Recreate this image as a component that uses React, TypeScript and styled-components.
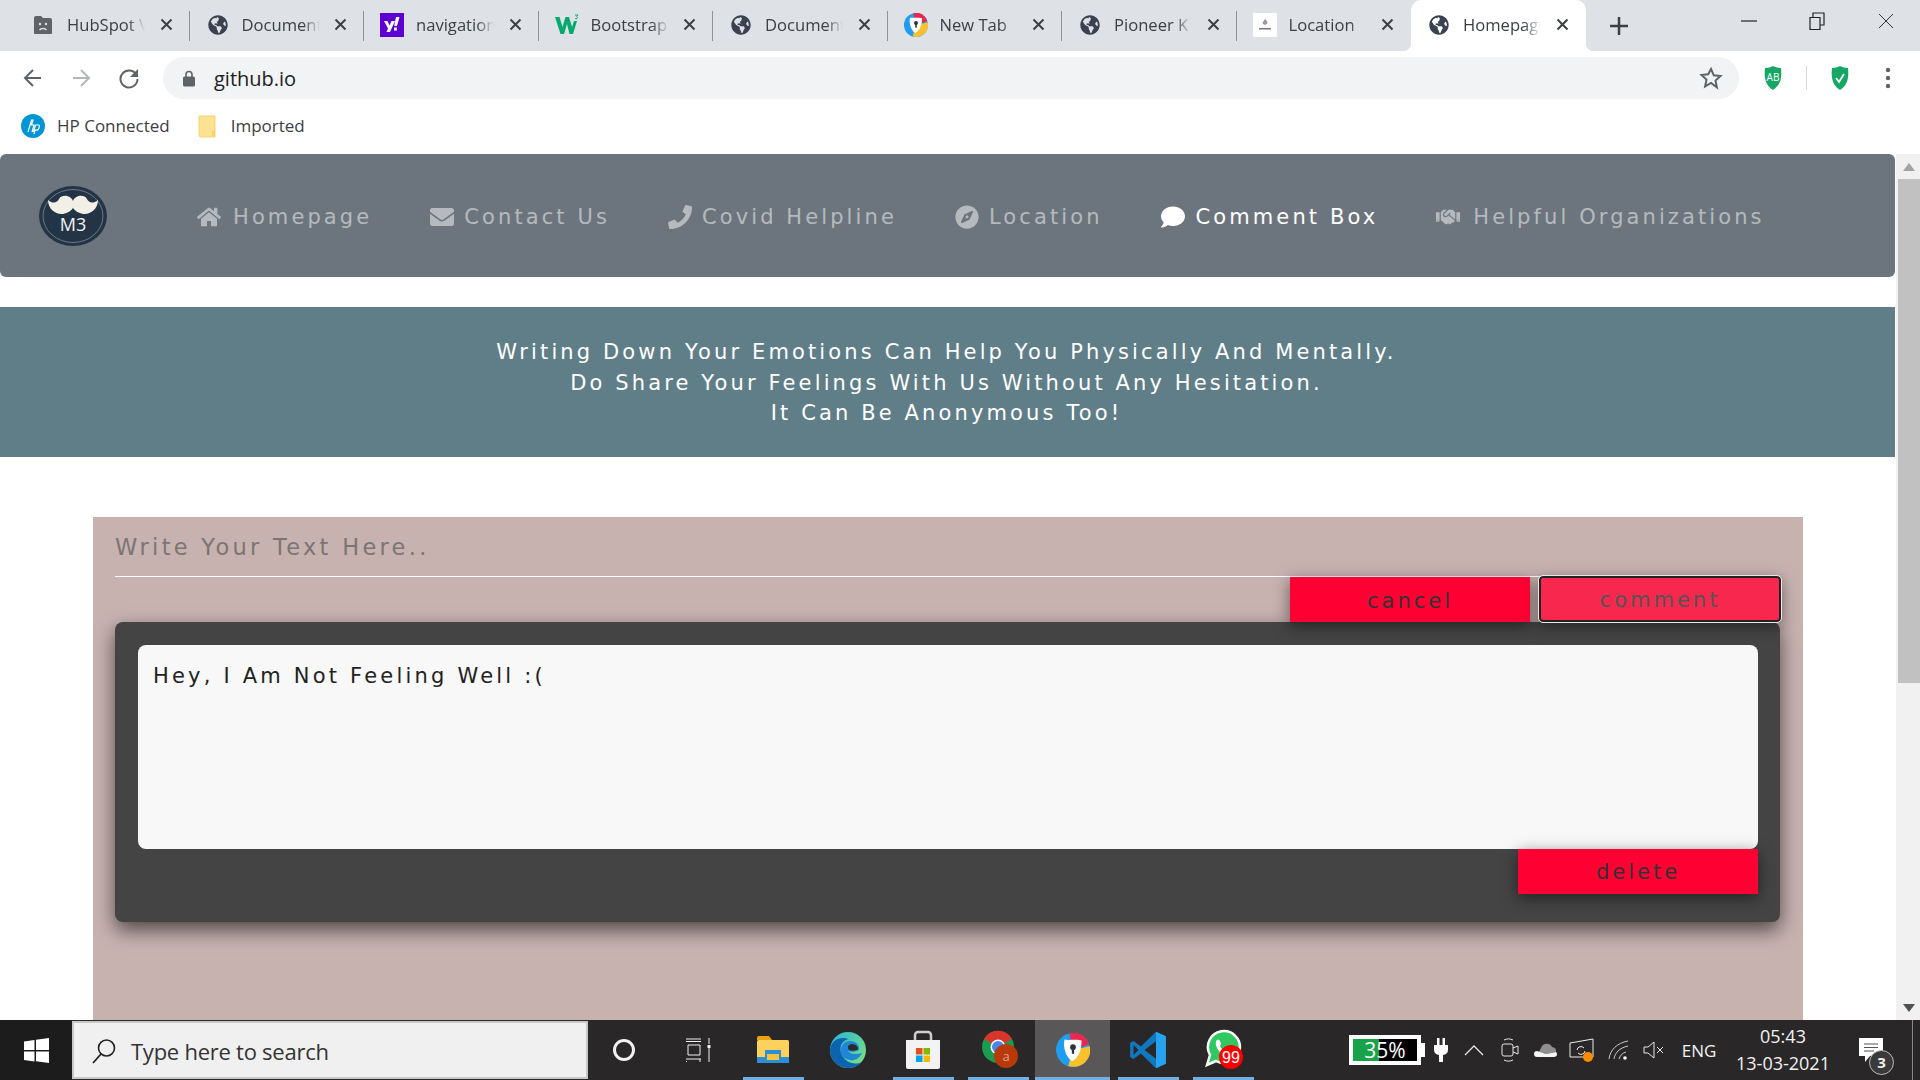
import React from "react";
import styled, { createGlobalStyle } from "styled-components";
import { FaHome, FaEnvelope, FaPhone, FaCompass, FaComment, FaHandshake, FaGlobeAmericas } from "react-icons/fa";

const Global = createGlobalStyle`
  html, body { margin: 0; padding: 0; height: 100%; overflow: hidden; background: #fff; }
  * { box-sizing: border-box; }
`;

const Screen = styled.div`
  width: 1920px; height: 1080px; display: flex; flex-direction: column; overflow: hidden;
  font-family: "Open Sans", "Liberation Sans", sans-serif;
`;

/* ---------- tab strip ---------- */
const TabStrip = styled.div`
  height: 51px; flex: none; background: #dee1e6; display: flex; align-items: stretch; padding-left: 15px;
`;
const TabItem = styled.div<{ $active?: boolean; $sep?: boolean }>`
  width: 174.5px; flex: none; position: relative; display: flex; align-items: center; padding: 0 0 2px 18px;
  background: ${(p) => (p.$active ? "#fff" : "transparent")};
  border-radius: ${(p) => (p.$active ? "10px 10px 0 0" : "0")};
  &::after {
    content: ""; position: absolute; right: 0; top: 11px; height: 30px; width: 1px;
    background: ${(p) => (p.$sep ? "#8f9296" : "transparent")};
  }
`;
const TabEar = styled.span<{ $side: "left" | "right" }>`
  position: absolute; bottom: 0; width: 8px; height: 8px; ${(p) => p.$side}: -8px;
  background: radial-gradient(circle at ${(p) => (p.$side === "left" ? "0 0" : "100% 0")}, transparent 8px, #fff 8.5px);
`;
const TabIcon = styled.span`
  width: 20px; height: 24px; flex: none; display: flex; align-items: center; justify-content: center; color: #3c4352;
  & svg { flex: none; }
`;
const TabTitle = styled.span`
  width: 78px; margin-left: 14px; flex: none; overflow: hidden; white-space: nowrap; font-size: 16.6px; color: #3c4043;
  mask-image: linear-gradient(to right, #000 78%, transparent 100%);
`;
const TabClose = styled.span`
  width: 20px; height: 20px; margin-left: 11px; flex: none; display: flex; align-items: center; justify-content: center;
`;
const NewTab = styled.div`
  width: 66px; display: flex; align-items: center; justify-content: center; flex: none;
`;
const WindowControls = styled.div`
  margin-left: auto; display: flex; align-items: flex-start; padding-right: 0;
`;
const WinBtn = styled.div`
  width: 68.5px; height: 42px; display: flex; align-items: center; justify-content: center;
`;

/* ---------- toolbar ---------- */
const Toolbar = styled.div`
  height: 52px; flex: none; background: #fff; display: flex; align-items: center; padding-top: 2px;
`;
const NavBtn = styled.div`
  width: 48px; height: 40px; flex: none; display: flex; align-items: center; justify-content: center;
`;
const NavBtnGroup = styled.div`
  width: 163px; flex: none; display: flex; padding-left: 9px;
`;
const Omnibox = styled.div`
  width: 1576px; height: 42px; flex: none; border-radius: 21px; background: #f1f3f4; display: flex; align-items: center;
  padding: 0 16px 0 20px;
`;
const UrlText = styled.span`
  margin-left: 19px; font-size: 20px; color: #202124; flex: 1;
`;
const ExtSlot = styled.div<{ $w: number }>`
  width: ${(p) => p.$w}px; flex: none; display: flex; align-items: center; justify-content: center;
`;
const ExtDivider = styled.div`
  width: 1px; height: 24px; background: #d9d9d9; flex: none;
`;

/* ---------- bookmarks ---------- */
const Bookmarks = styled.div`
  height: 51px; flex: none; background: #fff; display: flex; align-items: center; padding-left: 21px; padding-bottom: 6px;
`;
const Bookmark = styled.div<{ $gap: number }>`
  display: flex; align-items: center; gap: ${(p) => p.$gap}px; margin-right: 28px; font-size: 17px; color: #3c4043;
`;

/* ---------- page ---------- */
const Viewport = styled.div`
  flex: 1; min-height: 0; display: flex; overflow: hidden;
`;
const Page = styled.main`
  flex: 1; min-width: 0; overflow: hidden; background: #fff;
  font-family: "DejaVu Sans", Verdana, sans-serif;
`;
const Scrollbar = styled.div`
  width: 25px; flex: none; margin-left: 0; background: #f1f1f1; border-left: 1px solid #fff; display: flex; flex-direction: column; align-items: center;
  padding-left: 2px;
`;
const ScrollArrow = styled.div`
  height: 25px; flex: none; display: flex; align-items: center; justify-content: center;
`;
const ScrollThumb = styled.div`
  width: 100%; height: 504px; background: #c1c1c1; flex: none;
`;
const ScrollSpacer = styled.div`
  flex: 1;
`;

const Navbar = styled.nav`
  height: 123px; background: #6c757d; border-radius: 6px; display: flex; align-items: center; padding-left: 38px;
`;
const Logo = styled.div`
  width: 70px; height: 60px; flex: none; margin-right: 89px;
`;
const NavLinks = styled.div`
  display: flex; align-items: center; gap: 58px; padding-top: 2px;
`;
const NavLink = styled.a<{ $active?: boolean; $gap: number }>`
  display: flex; align-items: center; gap: ${(p) => p.$gap}px; font-size: 21px; letter-spacing: 3.1px; white-space: nowrap;
  color: ${(p) => (p.$active ? "#fff" : "rgba(255,255,255,.5)")};
  & svg { flex: none; }
`;
const Banner = styled.section`
  margin-top: 30px; height: 150px; background: #607e87; color: #fff; display: flex; flex-direction: column;
  align-items: center; justify-content: center; font-size: 21px; line-height: 30.5px; letter-spacing: 3.13px; padding: 2px 2px 0 0;
`;
const Card = styled.section`
  margin: 60px 92px 0 93px; height: 700px; background: #c7b2b0; padding: 0 23px 0 22px;
`;
const Prompt = styled.div`
  height: 60px; border-bottom: 1px solid #fff; display: flex; align-items: center; font-size: 22.5px; letter-spacing: 3.3px; color: #7b7573;
`;
const ActionRow = styled.div`
  display: flex; justify-content: flex-end; gap: 9px; height: 45px; position: relative; z-index: 2;
  & button { padding-top: 2px; }
`;
const RedButton = styled.button`
  width: 240px; height: 45px; border: 0; padding: 0; background: #ff0033; color: #333; font: inherit; font-size: 21px; letter-spacing: 3px;
  box-shadow: 0 4px 16px rgba(0, 0, 0, 0.5); position: relative;
`;
const CommentButton = styled(RedButton)`
  width: 242px; height: 46px; margin: -1px -1px 0 0; background: #f7274d; color: #555; border: 2px solid #222; border-radius: 4px;
  outline: 1px solid #e8e8e8;
`;
const DarkBox = styled.div`
  height: 300px; background: #444; border-radius: 8px; padding: 23px 22px 0 23px; box-shadow: 0 8px 20px rgba(0, 0, 0, 0.6);
`;
const NoteText = styled.div`
  height: 204px; background: #f8f8f8; border-radius: 8px; padding: 18px 15px; font-size: 21px; letter-spacing: 3.2px; line-height: 26px; color: #222;
`;
const DeleteRow = styled.div`
  display: flex; justify-content: flex-end;
`;

/* ---------- taskbar ---------- */
const Taskbar = styled.footer`
  height: 60px; flex: none; background: #292727; display: flex; align-items: stretch;
`;
const StartBtn = styled.div`
  width: 72px; flex: none; background: #1c1c1c; display: flex; align-items: center; justify-content: center;
`;
const SearchBox = styled.div`
  width: 516px; flex: none; margin: 1px 0; background: #f0f0f0; border: 2px solid #c8c8c8; border-left-width: 2px; display: flex; align-items: center;
  padding: 1px 0 0 17px; gap: 14px; font-size: 22px; color: #333; letter-spacing: -0.25px;
`;
const TaskSlot = styled.div<{ $w?: number; $open?: boolean; $active?: boolean }>`
  width: ${(p) => p.$w ?? 75}px; flex: none; position: relative; display: flex; align-items: center; justify-content: center;
  background: ${(p) => (p.$active ? "#595757" : "transparent")};
  &::after {
    content: ""; position: absolute; bottom: 0; height: 3px; background: #6fb0e6;
    left: ${(p) => (p.$active ? "0" : "8px")}; right: ${(p) => (p.$active ? "0" : "6px")};
    display: ${(p) => (p.$open ? "block" : "none")};
  }
`;
const Tray = styled.div`
  margin-left: 89px; display: flex; align-items: stretch; color: #f2f2f2;
`;
const TraySlot = styled.div<{ $w: number }>`
  width: ${(p) => p.$w}px; flex: none; display: flex; align-items: center; justify-content: center; position: relative;
`;
const NotifSlot = styled(TraySlot)`
  justify-content: flex-start; padding-left: 19px;
`;
const BatteryBox = styled.div`
  width: 73px; height: 30px; border: 4px solid #fff; background: linear-gradient(to right, #16a34a 0 41%, #000 41%); color: #fff;
  font-size: 21px; line-height: 22px; text-align: center;
`;
const BatteryNub = styled.div`
  width: 4px; height: 14px; background: #fff; flex: none;
`;
const EngLabel = styled.span`
  font-size: 17px;
`;
const Clock = styled.div`
  display: flex; flex-direction: column; align-items: center; font-size: 18px; line-height: 27px;
`;
const NotifBadge = styled.span`
  position: absolute; left: 30px; top: 30px; width: 25px; height: 25px; border-radius: 50%; border: 1.5px solid #bbb; background: #3a3a3a;
  font-size: 15px; font-weight: 700; line-height: 22px; text-align: center; color: #eee;
`;
const DesktopEdge = styled.div`
  width: 8px; flex: none; border-left: 1px solid #8a8a8a;
`;

/* ---------- drawings ---------- */
const CloseX = () => (
  <svg width="13" height="13" viewBox="0 0 13 13"><path d="M1.5 1.5l10 10M11.5 1.5l-10 10" stroke="#3c4043" strokeWidth="2" /></svg>
);
const Globe = () => <FaGlobeAmericas size={20} color="#3a4150" />;
const HubIcon = () => (
  <svg width="20" height="20" viewBox="0 0 20 20">
    <path d="M1 3a2 2 0 0 1 2-2h5l2 2h7a2 2 0 0 1 2 2v13a1 1 0 0 1-1 1H2a1 1 0 0 1-1-1z" fill="#5f6368" />
    <circle cx="7" cy="9" r="1.2" fill="#dee1e6" /><circle cx="13" cy="9" r="1.2" fill="#dee1e6" />
    <path d="M6.5 15c1.5-2 5.500-2 7 0" stroke="#dee1e6" strokeWidth="1.4" fill="none" />
  </svg>
);
const YahooIcon = () => (
  <svg width="24" height="24" viewBox="0 0 24 24">
    <rect width="24" height="24" fill="#5f01d1" />
    <path d="M4 8h3.500l2 4.500L11.500 8H15l-5 11H6.500l1.500-3.500zM16 4h3.500l-2.500 9h-2.800zM14 14.500h2.800V17.500H14z" fill="#fff" />
  </svg>
);
const W3Icon = () => (
  <svg width="26" height="22" viewBox="0 0 26 22">
    <path d="M1 3h4.500l3 10 3-10h3.500l3 10 2-6h3l-4 13h-3.500L13 10l-3 10H6.500z" fill="#04aa6d" />
    <path d="M21 1h3l-1.200 1.500a1.200 1.200 0 1 1-1.600 1.700" stroke="#04aa6d" strokeWidth="1" fill="none" />
  </svg>
);
const AvastIcon = ({ s = 24 }: { s?: number }) => (
  <svg width={s} height={s} viewBox="0 0 36 36">
    <circle cx="18" cy="18" r="18" fill="#1e9df1" />
    <path d="M18 18L14 0a18 18 0 0 1 21 12z" fill="#e8294f" />
    <path d="M18 18L36 14a18 18 0 0 1-23 21z" fill="#f9c02e" />
    <path d="M9 7c5 1 14-1 18 1 0 11-3 18-10 22C11 26 7 16 9 7z" fill="#fff" />
    <circle cx="18" cy="15" r="3" fill="#2b3440" /><rect x="16.800" y="15" width="2.400" height="7" fill="#2b3440" />
  </svg>
);
const LocIcon = () => (
  <svg width="24" height="24" viewBox="0 0 24 24">
    <rect width="24" height="24" fill="#fff" />
    <path d="M12 6c2 2 3 3 2 5-1 1-3 1-4 0-1-2 1-3 2-5z" fill="#999" /><rect x="6" y="15" width="12" height="1.500" fill="#777" />
  </svg>
);
const ChevArrow = ({ d, c }: { d: string; c: string }) => (
  <svg width="22" height="22" viewBox="0 0 22 22"><path d={d} stroke={c} strokeWidth="2" fill="none" /></svg>
);
const Shield = ({ children }: { children: React.ReactNode }) => (
  <svg width="22" height="26" viewBox="0 0 22 26">
    <path d="M3 3c3 0 6-1 8-2 2 1 5 2 8 2 1 9 0 17-8 22C3 20 2 12 3 3z" fill="#16a765" />
    {children}
  </svg>
);
const LogoArt = () => (
  <svg width="70" height="60" viewBox="0 0 70 60">
    <ellipse cx="35" cy="30" rx="34" ry="30" fill="#243447" />
    <ellipse cx="35" cy="30" rx="30" ry="26.500" fill="none" stroke="#7d8894" strokeWidth="0.800" />
    <path d="M35 15C38 8 47 9 49 13 51 17 55 18 60 14 60 23 52 29 45 28 40 27 37 25 35 22 33 25 30 27 25 28 18 29 10 23 10 14 15 18 19 17 21 13 23 9 32 8 35 15Z" fill="#f2efe6" />
    <text x="35" y="44.500" textAnchor="middle" fontFamily="Open Sans, sans-serif" fontSize="18" fill="#f2f2f2">M3</text>
  </svg>
);
const ExplorerIcon = () => (
  <svg width="34" height="30" viewBox="0 0 34 30">
    <path d="M1 3a2 2 0 0 1 2-2h10l3 4H1z" fill="#e8a317" />
    <rect x="1" y="5" width="32" height="21" rx="1.500" fill="#fcd15c" />
    <path d="M1 25V22h8v-7h16v7h8v3z" fill="#2b8fd8" /><rect x="11" y="19" width="12" height="7" fill="#f5c342" />
    <rect x="1" y="25" width="32" height="3" fill="#2b8fd8" />
  </svg>
);
const EdgeIcon = () => (
  <svg width="38" height="38" viewBox="0 0 38 38">
    <defs>
      <linearGradient id="eg" x1="0" y1="0" x2="1" y2="0.800"><stop offset="0" stopColor="#25b5e0" /><stop offset="1" stopColor="#78e07c" /></linearGradient>
    </defs>
    <circle cx="19" cy="19" r="18" fill="url(#eg)" />
    <path d="M1 19C2 9 11 5 20 8c-6 1-10 6-8 14 3 9 13 13 21 9-4 4-9 6-14 6C9 37 1 29 1 19z" fill="#0d63b0" />
    <path d="M12 22c-1-7 3-12 9-12 6 0 10 4 9 9-3 2-8 2-11 1 2 3 7 4 14 2-3 6-8 8-12 7-5-1-8-3-9-7z" fill="#1f87d6" />
    <path d="M20 19c-2-2-1-6 3-6 4 0 6 3 6 5-2 2-6 2-9 1z" fill="#2a2a2a" />
  </svg>
);
const StoreIcon = () => (
  <svg width="36" height="40" viewBox="0 0 36 40">
    <path d="M10 10V5a3 3 0 0 1 3-3h10a3 3 0 0 1 3 3v5" fill="none" stroke="#cfcfcf" strokeWidth="2.500" />
    <path d="M1 10h34v27a2 2 0 0 1-2 2H3a2 2 0 0 1-2-2z" fill="#f3f3f3" />
    <rect x="11" y="18" width="6.500" height="6.500" fill="#e74c23" /><rect x="18.500" y="18" width="6.500" height="6.500" fill="#7fba00" />
    <rect x="11" y="25.500" width="6.500" height="6.500" fill="#00a4ef" /><rect x="18.500" y="25.500" width="6.500" height="6.500" fill="#ffb900" />
  </svg>
);
const ChromeIcon = () => (
  <svg width="40" height="42" viewBox="-3 0 40 42">
    <circle cx="17" cy="18" r="16" fill="#1c9a4f" />
    <path d="M17 18L3 10a16 16 0 0 1 28 0z" fill="#d8362a" />
    <path d="M17 18h16a16 16 0 0 1-8 14z" fill="#f5c62f" />
    <circle cx="17" cy="18" r="7.500" fill="#fff" /><circle cx="17" cy="18" r="6" fill="#4a86e8" />
    <circle cx="25" cy="27" r="12" fill="#b8390c" />
    <text x="25" y="32" textAnchor="middle" fontSize="13" fontFamily="Open Sans, sans-serif" fill="#e8a080">a</text>
  </svg>
);
const VscodeIcon = () => (
  <svg width="38" height="38" viewBox="0 0 100 100">
    <path d="M71 98L31 59 12 74 3 69V31l9-5 19 15L71 2l26 12v72z" fill="#0f78c0" />
    <path d="M71 98V2l26 12v72z" fill="#26a2ee" />
    <path d="M71 27L41 50l30 23zM12 37v26l13-13z" fill="#292727" />
  </svg>
);
const WhatsappIcon = () => (
  <svg width="42" height="42" viewBox="-3 0 42 42">
    <path d="M2 36l3-10a16 16 0 1 1 6 6z" fill="#2fc95f" stroke="#fff" strokeWidth="2.500" />
    <path d="M12 11c2-2 4 2 4 4l-1 2c1 2 3 4 5 5l2-1c2 0 5 2 4 4-3 3-8 1-11-2s-6-9-3-12z" fill="#fff" />
    <circle cx="26" cy="28" r="12" fill="#f00" />
    <text x="26" y="33.500" textAnchor="middle" fontSize="16" fontFamily="Liberation Sans, sans-serif" fill="#fff">99</text>
  </svg>
);

const tabs: { title: string; icon: React.ReactNode }[] = [
  { title: "HubSpot V", icon: <HubIcon /> },
  { title: "Document", icon: <Globe /> },
  { title: "navigation", icon: <YahooIcon /> },
  { title: "Bootstrap", icon: <W3Icon /> },
  { title: "Document", icon: <Globe /> },
  { title: "New Tab", icon: <AvastIcon /> },
  { title: "Pioneer K", icon: <Globe /> },
  { title: "Location", icon: <LocIcon /> },
  { title: "Homepage", icon: <Globe /> },
];

const links = [
  { label: "Homepage", Icon: FaHome, gap: 12 },
  { label: "Contact Us", Icon: FaEnvelope, gap: 10 },
  { label: "Covid Helpline", Icon: FaPhone, gap: 10 },
  { label: "Location", Icon: FaCompass, gap: 10 },
  { label: "Comment Box", Icon: FaComment, gap: 11, active: true },
  { label: "Helpful Organizations", Icon: FaHandshake, gap: 13 },
];

export default function App() {
  return (
    <Screen>
      <Global />
      <TabStrip>
        {tabs.map((t, i) => (
          <TabItem key={i} $active={i === 8} $sep={i < 7}>
            {i === 8 && <TabEar $side="left" />}
            {i === 8 && <TabEar $side="right" />}
            <TabIcon>{t.icon}</TabIcon>
            <TabTitle>{t.title}</TabTitle>
            <TabClose><CloseX /></TabClose>
          </TabItem>
        ))}
        <NewTab>
          <svg width="20" height="20" viewBox="0 0 20 20"><path d="M10 1v18M1 10h18" stroke="#3c4043" strokeWidth="2.500" /></svg>
        </NewTab>
        <WindowControls>
          <WinBtn><svg width="16" height="4" viewBox="0 0 16 4"><path d="M0 2h16" stroke="#222" strokeWidth="1.200" /></svg></WinBtn>
          <WinBtn>
            <svg width="16" height="18" viewBox="0 0 16 18"><path d="M1 5.500h10v12H1zM4 5V1h11v12h-4" fill="none" stroke="#222" strokeWidth="1.200" /></svg>
          </WinBtn>
          <WinBtn><svg width="16" height="16" viewBox="0 0 16 16"><path d="M1 1l14 14M15 1L1 15" stroke="#333" strokeWidth="1" /></svg></WinBtn>
        </WindowControls>
      </TabStrip>

      <Toolbar>
        <NavBtnGroup>
          <NavBtn><ChevArrow d="M19 11H4M11 3l-8 8 8 8" c="#5f6368" /></NavBtn>
          <NavBtn><ChevArrow d="M3 11h15M11 3l8 8-8 8" c="#b4b7ba" /></NavBtn>
          <NavBtn>
            <svg width="22" height="22" viewBox="0 0 22 22"><path d="M18.500 8A8.500 8.500 0 1 0 19.500 12" fill="none" stroke="#5f6368" strokeWidth="2" /><path d="M20 2v8h-8z" fill="#5f6368" /></svg>
          </NavBtn>
        </NavBtnGroup>
        <Omnibox>
          <svg width="12" height="17" viewBox="0 0 12 17"><path d="M3 7V4.500a3 3 0 0 1 6 0V7" fill="none" stroke="#5f6368" strokeWidth="1.600" /><rect y="6.500" width="12" height="10" rx="1.500" fill="#5f6368" /></svg>
          <UrlText>github.io</UrlText>
          <svg width="24" height="24" viewBox="0 0 24 24"><path d="M12 3l2.800 6.300 6.700.7-5 4.600 1.400 6.800L12 17l-5.900 3.400 1.400-6.800-5-4.600 6.700-.7z" fill="none" stroke="#5f6368" strokeWidth="2" /></svg>
        </Omnibox>
        <ExtSlot $w={67}>
          <Shield><text x="11" y="16" textAnchor="middle" fontSize="10" fontFamily="Open Sans, sans-serif" fill="#fff">AB</text></Shield>
        </ExtSlot>
        <ExtDivider />
        <ExtSlot $w={66}>
          <Shield><path d="M7 13l3 4 5-8" stroke="#fff" strokeWidth="1.800" fill="none" /></Shield>
        </ExtSlot>
        <ExtSlot $w={30}>
          <svg width="6" height="22" viewBox="0 0 6 22"><circle cx="3" cy="3" r="2.200" fill="#5f6368" /><circle cx="3" cy="11" r="2.200" fill="#5f6368" /><circle cx="3" cy="19" r="2.200" fill="#5f6368" /></svg>
        </ExtSlot>
      </Toolbar>

      <Bookmarks>
        <Bookmark $gap={12}>
          <svg width="24" height="24" viewBox="0 0 24 24"><circle cx="12" cy="12" r="12" fill="#0096d6" /><path d="M7 18l3.500-12h1.500L10.500 11h2.500l-1.800 6.500h1.500L14.500 11l3 0c1 0 1 1 .8 2l-.8 2c-.3 1-1 1.200-2 1.200h-1.500L13 20" fill="none" stroke="#fff" strokeWidth="1.200" /></svg>
          HP Connected
        </Bookmark>
        <Bookmark $gap={15}>
          <svg width="18" height="24" viewBox="0 0 18 24"><path d="M1 2h16v21H3a2 2 0 0 1-2-2z" fill="#fde293" stroke="#f5d36a" /><path d="M14 17v5h3v-5z" fill="#f5d36a" /></svg>
          Imported
        </Bookmark>
      </Bookmarks>

      <Viewport>
        <Page>
          <Navbar>
            <Logo><LogoArt /></Logo>
            <NavLinks>
              {links.map(({ label, Icon, active, gap }) => (
                <NavLink key={label} $active={active} $gap={gap}><Icon size={24} />{label}</NavLink>
              ))}
            </NavLinks>
          </Navbar>
          <Banner>
            <div>Writing Down Your Emotions Can Help You Physically And Mentally.</div>
            <div>Do Share Your Feelings With Us Without Any Hesitation.</div>
            <div>It Can Be Anonymous Too!</div>
          </Banner>
          <Card>
            <Prompt>Write Your Text Here..</Prompt>
            <ActionRow>
              <RedButton>cancel</RedButton>
              <CommentButton>comment</CommentButton>
            </ActionRow>
            <DarkBox>
              <NoteText>Hey, I Am Not Feeling Well :(</NoteText>
              <DeleteRow><RedButton>delete</RedButton></DeleteRow>
            </DarkBox>
          </Card>
        </Page>
        <Scrollbar>
          <ScrollArrow><svg width="12" height="8" viewBox="0 0 12 8"><path d="M6 0l6 8H0z" fill="#a3a3a3" /></svg></ScrollArrow>
          <ScrollThumb />
          <ScrollSpacer />
          <ScrollArrow><svg width="12" height="8" viewBox="0 0 12 8"><path d="M0 0h12L6 8z" fill="#505050" /></svg></ScrollArrow>
        </Scrollbar>
      </Viewport>

      <Taskbar>
        <StartBtn>
          <svg width="25" height="25" viewBox="0 0 25 25"><path d="M0 3.500l10.500-1.500v10H0zM12 1.800L25 0v12H12zM0 13.500h10.500v10L0 22zM12 13.500h13V25l-13-1.800z" fill="#fff" /></svg>
        </StartBtn>
        <SearchBox>
          <svg width="26" height="26" viewBox="0 0 26 26"><circle cx="15.500" cy="10" r="8" fill="none" stroke="#222" strokeWidth="1.600" /><path d="M10 16L2 25" stroke="#222" strokeWidth="1.800" /></svg>
          Type here to search
        </SearchBox>
        <TaskSlot $w={72}>
          <svg width="24" height="24" viewBox="0 0 24 24"><circle cx="12" cy="12" r="9.500" fill="none" stroke="#f2f2f2" strokeWidth="3" /></svg>
        </TaskSlot>
        <TaskSlot>
          <svg width="26" height="24" viewBox="0 0 26 24"><path d="M1 1h15M1 3.500h15M3 7h12v10H3zM1 21h15M1 23.500h1M15 21v3M24 0v6M24 10v14" stroke="#f2f2f2" strokeWidth="1" fill="none" /><rect x="22.500" y="7" width="3" height="3" fill="#f2f2f2" /></svg>
        </TaskSlot>
        <TaskSlot $open><ExplorerIcon /></TaskSlot>
        <TaskSlot><EdgeIcon /></TaskSlot>
        <TaskSlot $open><StoreIcon /></TaskSlot>
        <TaskSlot $open><ChromeIcon /></TaskSlot>
        <TaskSlot $open $active><AvastIcon s={34} /></TaskSlot>
        <TaskSlot $open><VscodeIcon /></TaskSlot>
        <TaskSlot $open><WhatsappIcon /></TaskSlot>
        <Tray>
          <TraySlot $w={76}>
            <BatteryBox>35%</BatteryBox><BatteryNub />
          </TraySlot>
          <TraySlot $w={32}>
            <svg width="14" height="24" viewBox="0 0 14 24"><path d="M3 0h2.500v7H3zM8.500 0H11v7H8.500zM0 7h14v5a5 5 0 0 1-5 5v7H5v-7a5 5 0 0 1-5-5z" fill="#fff" /></svg>
          </TraySlot>
          <TraySlot $w={34}>
            <svg width="20" height="12" viewBox="0 0 20 12"><path d="M1 11l9-9 9 9" fill="none" stroke="#e8e8e8" strokeWidth="1.300" /></svg>
          </TraySlot>
          <TraySlot $w={38}>
            <svg width="18" height="24" viewBox="0 0 18 24"><rect x="1" y="6" width="11" height="12" rx="2" fill="none" stroke="#e8e8e8" /><path d="M12 10l5-2v8l-5-2M3 2c3-1.500 6-1.500 9 0M3 22c3 1.500 6 1.500 9 0" fill="none" stroke="#e8e8e8" /></svg>
          </TraySlot>
          <TraySlot $w={34}>
            <svg width="24" height="16" viewBox="0 0 24 16"><path d="M7 6a6 6 0 0 1 11-1 4 4 0 0 1 4 5L12 12 5 10z" fill="#8f8f8f" /><path d="M3 15a3 3 0 0 1 0-6l9 3 10-2c2 2 1 5-2 5z" fill="#f5f5f5" /></svg>
          </TraySlot>
          <TraySlot $w={38}>
            <svg width="26" height="24" viewBox="0 0 26 24"><path d="M1 5l23-4v18H1zM8 12a4 4 0 0 1 7-2M16 13a4 4 0 0 1-7 2" fill="none" stroke="#eee" strokeWidth="1" /><circle cx="19" cy="19" r="5" fill="#ff8c00" /></svg>
          </TraySlot>
          <TraySlot $w={36}>
            <svg width="22" height="20" viewBox="0 0 22 20"><path d="M1 19C2 10 9 3 20 1M6 19c1-6 5-11 14-13M11 19c1-3 3-6 7-7" fill="none" stroke="#ccc" strokeWidth="1" /><circle cx="17" cy="18" r="1.800" fill="#fff" /></svg>
          </TraySlot>
          <TraySlot $w={34}>
            <svg width="22" height="18" viewBox="0 0 22 18"><path d="M1 6h4l6-5v16l-6-5H1zM14 6l6 6M20 6l-6 6" fill="none" stroke="#e8e8e8" strokeWidth="1" /></svg>
          </TraySlot>
          <TraySlot $w={56}><EngLabel>ENG</EngLabel></TraySlot>
          <TraySlot $w={112}><Clock><span>05:43</span><span>13-03-2021</span></Clock></TraySlot>
          <NotifSlot $w={73}>
            <svg width="26" height="26" viewBox="0 0 26 26"><path d="M1 1h24v18H12l-5 6v-6H1z" fill="#fff" /><path d="M6 7h14M6 10.500h14M6 14h10" stroke="#555" strokeWidth="1" /></svg>
            <NotifBadge>3</NotifBadge>
          </NotifSlot>
          <DesktopEdge />
        </Tray>
      </Taskbar>
    </Screen>
  );
}
